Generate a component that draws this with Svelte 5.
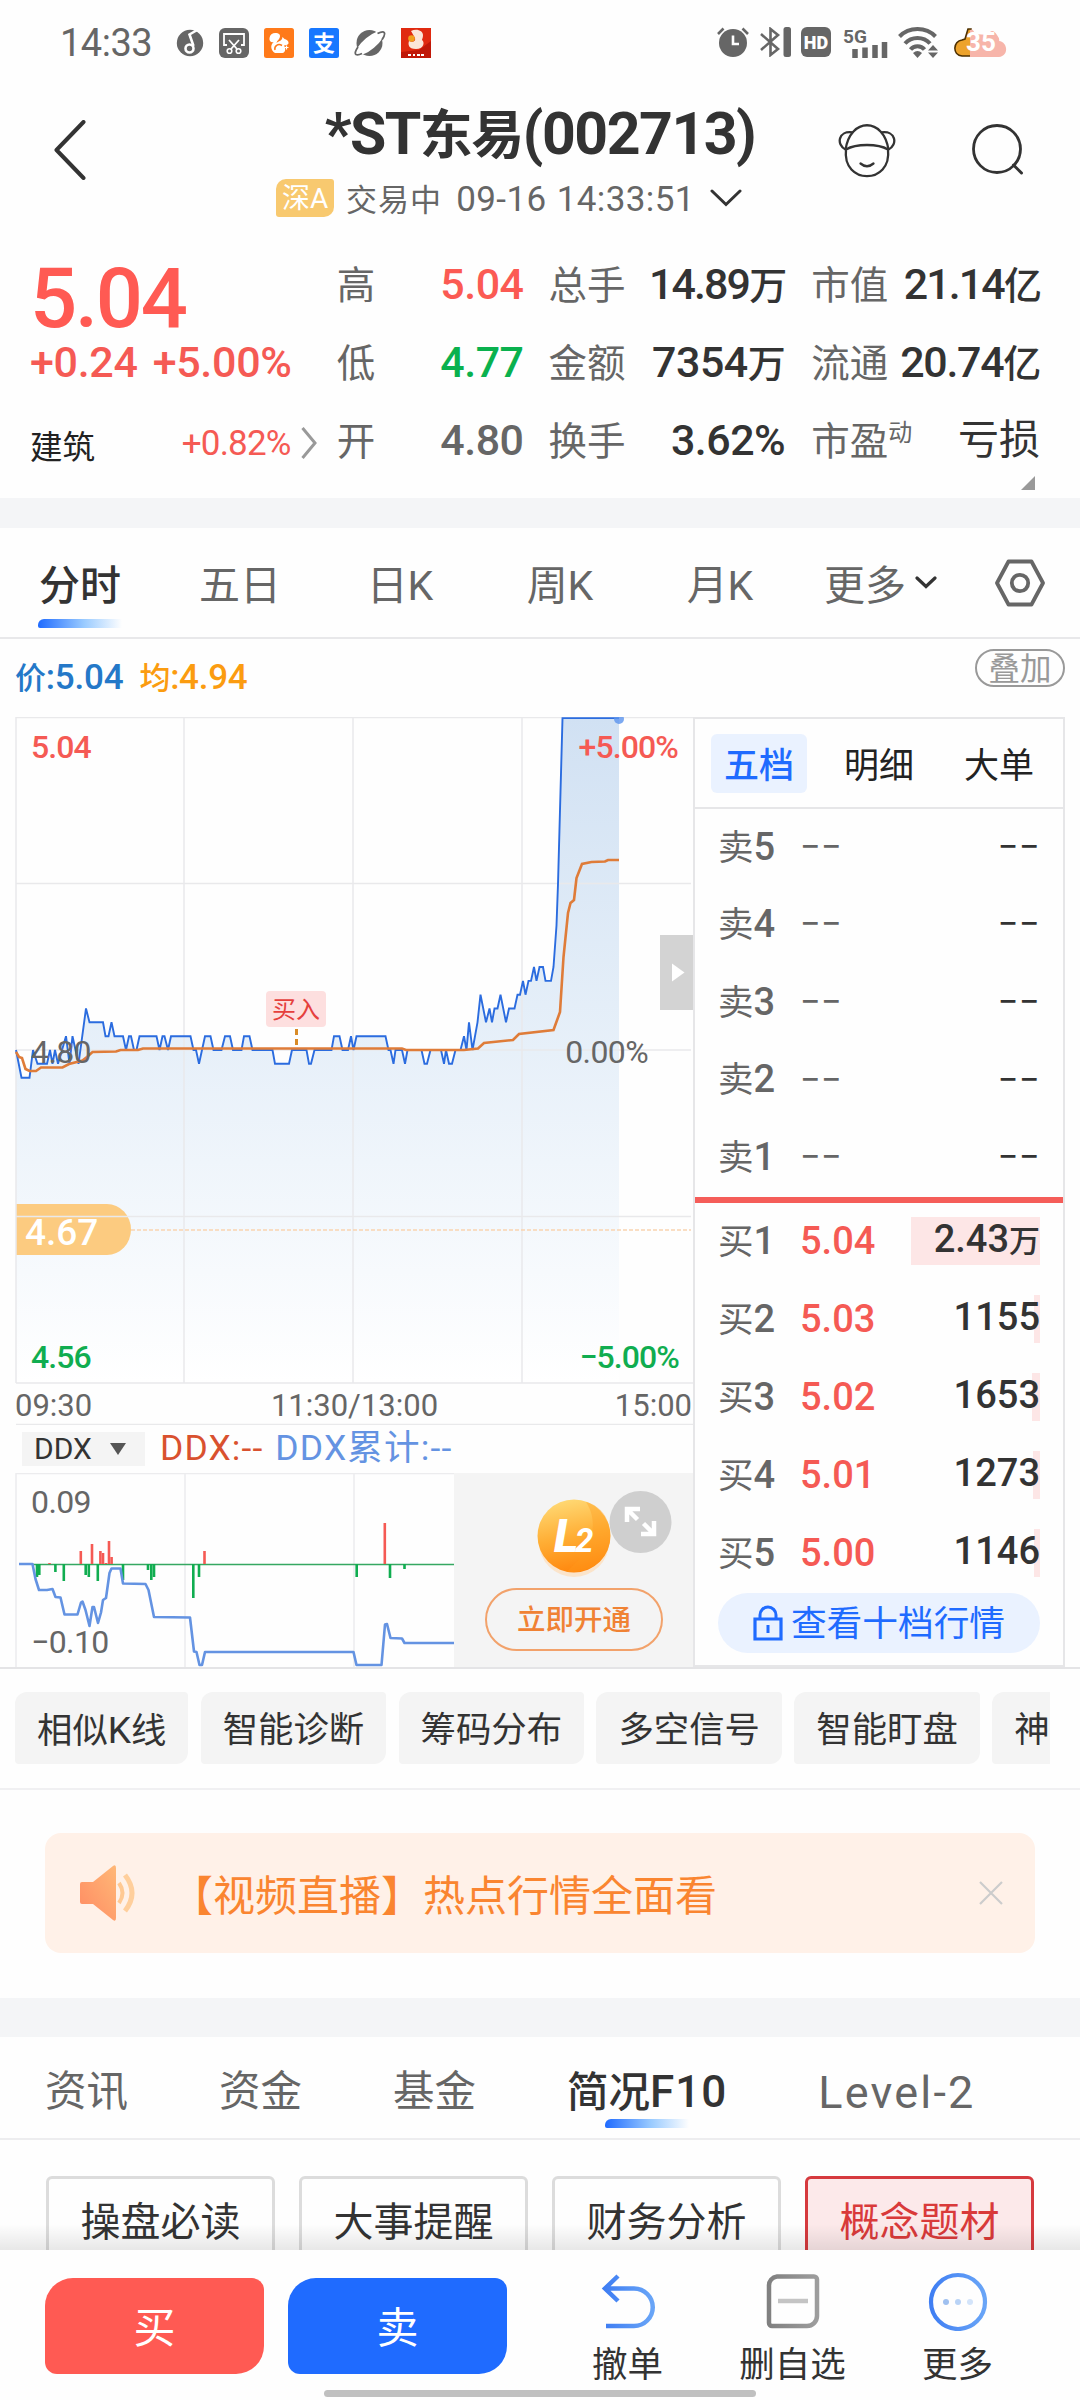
<script lang="ts">
  type Stat = { label: string; sup?: string; value: string; tone?: string };

  // one inner array per column of the quote header
  const stats: Stat[][] = [
    [
      { label: '高', value: '5.04', tone: 'up' },
      { label: '低', value: '4.77', tone: 'down' },
      { label: '开', value: '4.80', tone: 'flat' },
    ],
    [
      { label: '总手', value: '14.89万' },
      { label: '金额', value: '7354万' },
      { label: '换手', value: '3.62%' },
    ],
    [
      { label: '市值', value: '21.14亿' },
      { label: '流通', value: '20.74亿' },
      { label: '市盈', sup: '动', value: '亏损' },
    ],
  ];

  const periods = ['分时', '五日', '日K', '周K', '月K'];
  const asks = [5, 4, 3, 2, 1];
  const bids = [
    { price: '5.04', volume: '2.43万', bar: 129 },
    { price: '5.03', volume: '1155', bar: 6 },
    { price: '5.02', volume: '1653', bar: 8 },
    { price: '5.01', volume: '1273', bar: 7 },
    { price: '5.00', volume: '1146', bar: 6 },
  ];
  const tools = ['相似K线', '智能诊断', '筹码分布', '多空信号', '智能盯盘', '神奇九转'];
  const sections = ['资讯', '资金', '基金', '简况F10', 'Level-2'];
  const topics = ['操盘必读', '大事提醒', '财务分析', '概念题材'];

  // [x, ticks of 0.01 away from the previous close]
  const price = [
    [16, 0], [21.5, -2], [29.5, -2], [33, 0], [37.5, -1], [47, -1], [50, 0], [52.5, -1], [55, 0], [58, -1],
    [66, 1], [69.5, -1], [72.5, 1], [78.5, -1], [86, 3], [89.5, 2], [103, 2], [105.5, 1], [108.5, 1], [111.5, 2],
    [114.5, 1], [123, 1], [126, 0], [129, 1], [131, 1], [134, 0], [136.5, 0], [139.5, 1], [156.5, 1], [159.5, 0],
    [162.5, 1], [164.5, 1], [168, 0], [171, 1], [190.5, 1], [193.5, 0], [196, 0], [199, -1], [205, 1], [210.5, 1],
    [213.5, 0], [221.5, 0], [225, 1], [230, 1], [233, 0], [241.5, 0], [244, 1], [249.5, 1], [252.5, 0], [272.5, 0],
    [275, -1], [289, -1], [292, 0], [306.5, 0], [309, -1], [311, -1], [314.5, 0], [331.5, 0], [334, 1], [339.5, 1],
    [342.5, 0], [348, 0], [351, 1], [353.5, 0], [356.5, 1], [385.5, 1], [388.5, 0], [390.5, 0], [393.5, -1], [395.5, 0],
    [402, 0], [405, -1], [407.5, 0], [421.5, 0], [424.5, -1], [427, -1], [430.5, 0], [441, 0], [444, -1], [446, 0],
    [449, -1], [452, -1], [455.5, 0], [460.5, 0], [464, 1], [466.5, 0], [469, 2], [472.5, 0], [477.5, 2], [480.5, 4],
    [486, 2], [489.5, 3], [492, 2], [494.5, 3], [497.5, 3], [500.5, 4], [506, 2], [509, 3], [514.5, 3], [517.5, 4],
    [520, 4], [523, 5], [525.5, 4], [528.5, 5], [531, 5], [534, 6], [536.5, 5], [539.5, 6], [543, 6], [545.5, 5],
    [551, 5], [553.5, 6], [556.5, 9], [558, 12], [562.5, 24], [619, 24],
  ];
  const pricePoints = price.map(([x, t]) => `${x},${(1050 - t * 13.83).toFixed(1)}`).join(' ');

  const average =
    '16,1052 19,1057 22,1058 25.5,1069 29.5,1071 36,1071 41,1067.5 62.5,1067.5 69,1064 82.5,1060.5 87,1057 92.5,1052 116,1051.5 120.5,1050 138,1050 143,1048.5 402,1048.5 406,1050 464,1050 478,1048.5 484,1043 513,1040 519,1034 553.5,1030 560,1012 563.5,957 568,913 570.5,903 574,900 576.5,878 582,864 591.5,862 605,861.5 608,860 619,860';

  // [x, height], positive bars go up
  const ddxBars = [
    [37, -13], [39.3, -11], [49.5, 1], [55.4, -8], [63.8, -17], [80.8, 13], [85.7, -11], [88.8, -13], [92, 20],
    [97.8, -17], [100.4, 13], [103, 11], [106, 1], [109, 23], [111.6, 7], [123, -16], [148, -6], [151.3, -16],
    [154, -13], [193.3, -34], [199, -13], [204.5, 13], [356.7, -13], [384.8, 41], [390, -14], [404.5, -5],
  ];
  const ddxLine =
    '19,1564 32.5,1564 35.5,1579 39,1590 47,1590 52.5,1589 55.5,1597 60.5,1597.5 64.5,1614.5 77.5,1614.5 81,1602.5 82.5,1601.5 85.5,1610 89.5,1626 92.5,1607 94,1607 98,1623 101,1612.5 103,1600 106,1598 109.5,1573 111.5,1568.5 120.5,1568.5 123,1583.5 145.5,1584 148.5,1590 154,1617 190,1617.5 194,1651.5 196.5,1652 199.5,1665 202,1665 205,1652 353.5,1652 356.5,1665 381.5,1665 385,1624.5 387,1624 390.5,1638 402,1638.5 404.5,1643 454,1643';

  // latin runs are set a little larger than the hanzi next to them
  const HAN = /[\u4e00-\u9fff]/;
  const runs = (text: string) => text.match(/[\u4e00-\u9fff]+|[^\u4e00-\u9fff]+/g) ?? [];
</script>

{#snippet mixed(text: string)}{#each runs(text) as run}<span class:num={!HAN.test(run)}>{run}</span>{/each}{/snippet}

<div class="screen">
  <div class="status">
    <span class="clock">14:33</span>
    <div class="apps">
      <svg width="28" height="30" viewBox="0 0 28 30">
        <circle cx="14" cy="15" r="13.2" fill="#666" />
        <path d="M22 1.500 13.500 6.500 17.500 18" fill="none" stroke="#fff" stroke-width="2.600" />
        <circle cx="13.500" cy="20.500" r="4" fill="#666" stroke="#fff" stroke-width="2.600" />
      </svg>
      <svg width="30" height="30" viewBox="0 0 30 30">
        <rect width="30" height="30" rx="6" fill="#666" />
        <path d="M8 17H5V6H25V17H22" fill="none" stroke="#fff" stroke-width="1.800" />
        <path d="M10 12 L18 21 M20 12 L12 21" stroke="#fff" stroke-width="1.800" />
        <circle cx="10.500" cy="23" r="2.300" fill="none" stroke="#fff" stroke-width="1.600" />
        <circle cx="19.500" cy="23" r="2.300" fill="none" stroke="#fff" stroke-width="1.600" />
      </svg>
      <svg width="30" height="30" viewBox="0 0 30 30">
        <rect width="30" height="30" rx="2.500" fill="#ff7a1a" />
        <path d="M9.500 24C6 20 7 16 10 14c-3 1-5-1-4.500-4C6 6 9 4.500 12.500 5s4.500 3 2.500 6c-1 1.500-2 2-2.500 4 1.500-2 4-1.500 5.500-4l.5-2 2 2c2.500.5 4.500 2.500 4 4.500-1 2-3 1.500-4.500 2 2 3 1.500 7-1.500 7.500H11z" fill="#fff" />
        <path d="M11 22c-1-4 3-7 7-4.500" fill="none" stroke="#ff7a1a" stroke-width="1.500" />
        <path d="M20.500 19.500h4M22.500 17.500v4" stroke="#fff" stroke-width="1.200" />
      </svg>
      <svg width="30" height="30" viewBox="0 0 30 30">
        <rect width="30" height="30" rx="2.500" fill="#1777ff" />
        <text x="15" y="22.500" text-anchor="middle" class="zhi">支</text>
      </svg>
      <svg width="32" height="30" viewBox="0 0 32 30">
        <circle cx="15.500" cy="15" r="13" fill="#666" />
        <ellipse cx="16" cy="15" rx="17.500" ry="6.200" transform="rotate(-40 16 15)" fill="#fff" />
        <path d="M4 19c-2.500 3.500-3.500 6.500-2 7.500 1.500.8 4 0 6-1M23.500 5.500c3-1.500 6-2 6.800-.8.800 1.200-.3 4-2.300 7" fill="none" stroke="#666" stroke-width="1.800" />
      </svg>
      <svg width="30" height="30" viewBox="0 0 30 30">
        <rect width="30" height="30" fill="#e02a10" />
        <path d="M18 22 30 13V30H0V24z" fill="#c01808" />
        <path d="M10 3c6-3 12 0 12 4 0 3-1 4-1 5 3 2 2 9-6 9s-8-5-7-8c4 2 7 0 6-3z" fill="#fbe6d8" />
        <circle cx="10.500" cy="10.500" r="3.300" fill="#f0a01c" />
        <path d="M7 27h3M12 27h2M16 27h3M20 27h3" stroke="#fff" stroke-width="1.800" />
      </svg>
    </div>
    <div class="signals">
      <svg width="34" height="30" viewBox="0 0 34 30">
        <circle cx="17" cy="16" r="14" fill="#666" />
        <path d="M2 7 7.500 1.500 M32 7 26.500 1.500" stroke="#666" stroke-width="2.600" />
        <path d="M17 8.500V17H23" fill="none" stroke="#fff" stroke-width="2.600" />
      </svg>
      <svg width="31" height="30" viewBox="0 0 31 30">
        <path d="M1 7 18 22 10.500 28V2L18 8 1 23" fill="none" stroke="#666" stroke-width="2.600" />
        <rect x="23.500" y="0" width="7.500" height="30" rx="2.500" fill="#666" />
      </svg>
      <svg width="30" height="30" viewBox="0 0 30 30">
        <rect width="30" height="30" rx="6" fill="#666" />
        <text x="15" y="21.500" text-anchor="middle" class="hd">HD</text>
      </svg>
      <svg class="cell" width="45" height="32" viewBox="0 0 45 32">
        <text x="0" y="16" class="fiveg">5G</text>
        <path d="M12 31V22M22 31V20.500M32 31V18M41.500 31V15" stroke="#666" stroke-width="5.500" />
      </svg>
      <svg width="40" height="31" viewBox="0 0 40 31">
        <g fill="none" stroke="#666" stroke-width="4">
          <path d="M1.500 9.500C11-.5 28-.5 37.500 9.500" />
          <path d="M7 16.500C13.500 9 25.500 9 32 16.500" />
          <path d="M12.500 22.500C16 18 23 18 26.500 22.500" />
        </g>
        <path d="M15 26q4.500-4 9 0l-4.500 5z" fill="#666" />
        <path d="M30 23.500 35 18l5 5.500zM30 25.500h10L35 31z" fill="#666" />
      </svg>
      <svg class="power" width="53" height="31" viewBox="0 0 53 31">
        <path d="M11 12 14 2l3 0 1 27H8C-2 28-1 14 8 13z" fill="#eda32c" stroke="#4d3000" stroke-width="1.600" />
        <path d="M16 30V3q3-2 5 4l13 1q4-8 9 0 3 4 2 6c9 1 10 15 0 16z" fill="#f7b5aa" />
        <text x="27" y="24" text-anchor="middle" class="battery">35</text>
      </svg>
    </div>
  </div>

  <header>
    <svg class="back" width="32" height="60" viewBox="0 0 32 60">
      <path d="M29.500 2 2.500 30 29.500 58" fill="none" stroke="#333" stroke-width="4" stroke-linecap="round" stroke-linejoin="round" />
    </svg>
    <div class="heading">
      <h1>{@render mixed('*ST东易(002713)')}</h1>
      <div class="session">
        <span class="badge">深A</span>
        <span class="time">{@render mixed('交易中 09-16 14:33:51')}</span>
        <svg width="32" height="18" viewBox="0 0 32 18">
          <path d="M2 2 16 15.500 30 2" fill="none" stroke="#333" stroke-width="3" stroke-linecap="round" />
        </svg>
      </div>
    </div>
    <div class="actions">
      <svg width="58" height="54" viewBox="0 0 58 54">
        <g fill="none" stroke="#333" stroke-width="2.300">
          <path d="M7.500 25.500C-2 21 0 6 15 8.500M50.500 25.500C60 21 58 6 43 8.500" />
          <path d="M7.500 26C12-7 46-7 50.500 26" />
          <path d="M8 25.500C18 19.500 40 19.500 50 25.500C54 61 4 61 8 25.500Z" />
          <path d="M22.500 39.500Q29 45 35.500 39.500" stroke-linecap="round" />
        </g>
      </svg>
      <svg width="52" height="52" viewBox="0 0 52 52">
        <circle cx="25" cy="25" r="23.500" fill="none" stroke="#333" stroke-width="2.800" />
        <path d="M41.500 41 49.500 49" stroke="#333" stroke-width="3" stroke-linecap="round" />
      </svg>
    </div>
  </header>

  <section class="quote">
    <div class="last">
      <div class="price">5.04</div>
      <div class="change"><span>+0.24</span><span>+5.00%</span></div>
      <div class="sector">
        <span class="name">建筑</span>
        <span class="pct">+0.82%</span>
        <svg width="16" height="32" viewBox="0 0 16 32">
          <path d="M1.500 1 14 16 1.500 31" fill="none" stroke="#999" stroke-width="3" />
        </svg>
      </div>
    </div>
    {#each stats as column}
      <dl>
        {#each column as stat}
          <div class="stat">
            <dt>{stat.label}{#if stat.sup}<sup>{stat.sup}</sup>{/if}</dt>
            <dd class={stat.tone} class:word={stat.value === '亏损'} class:tight={stat.value.includes('1')}>{@render mixed(stat.value)}</dd>
          </div>
        {/each}
      </dl>
    {/each}
    <span class="corner"></span>
  </section>

  <div class="strip"></div>

  <nav class="periods">
    {#each periods as period, i}
      <span class="period" class:active={i === 0}>{period}</span>
    {/each}
    <span class="more">
      <span>更多</span>
      <svg width="22" height="14" viewBox="0 0 22 14">
        <path d="M2 2 11 10.500 20 2" fill="none" stroke="#333" stroke-width="3.200" stroke-linecap="round" />
      </svg>
    </span>
    <svg class="settings" width="52" height="48" viewBox="0 0 52 48">
      <path d="M14.500 2.500H37.500L49 24 37.500 45.500H14.500L3 24Z" fill="none" stroke="#666" stroke-width="3.800" stroke-linejoin="round" />
      <circle cx="26" cy="24" r="8.200" fill="none" stroke="#666" stroke-width="3.800" />
    </svg>
  </nav>

  <div class="legend">
    <span class="now">{@render mixed('价:5.04')}</span>
    <span class="avg">{@render mixed('均:4.94')}</span>
    <span class="overlay">叠加</span>
  </div>

  <section class="board">
    <div class="charts">
      <svg class="trend" width="678" height="708" viewBox="15 717 678 708">
        <defs>
          <linearGradient id="area" x1="0" y1="0" x2="0" y2="1">
            <stop offset="0" stop-color="#d1e1f3" />
            <stop offset="0.500" stop-color="#e7f0f9" />
            <stop offset="1" stop-color="#fff" />
          </linearGradient>
        </defs>
        <polygon points="{pricePoints} 619,1383 16,1383" fill="url(#area)" />
        <path d="M16 1204H107a24 25.500 0 0 1 0 51H16z" fill="#fccb80" />
        <g stroke="#e9e9eb" stroke-width="1.500">
          <path d="M16 717.500H693M16 883.500H691M16 1050H691M16 1216.500H691M16 1383H693M16 1424.500H693" />
          <path d="M16 717V1383M184 717V1383M353 717V1383M522 717V1383" />
        </g>
        <path d="M131 1230H691" stroke="#f9d3b0" stroke-width="1.500" stroke-dasharray="4 2" />
        <polyline points={pricePoints} fill="none" stroke="#2b6cdf" stroke-width="1.900" />
        <polyline points={average} fill="none" stroke="#df7c39" stroke-width="2.600" />
        <circle cx="619" cy="719" r="5" fill="#5b93ee" opacity="0.800" />
        <text x="31" y="1062.500" class="tick flat">4.80</text>
        <text x="648" y="1062.500" text-anchor="end" class="tick flat">0.00%</text>
        <text x="31" y="758" class="tick up">5.04</text>
        <text x="678" y="758" text-anchor="end" class="tick up">+5.00%</text>
        <text x="31" y="1367.500" class="tick down">4.56</text>
        <text x="679" y="1367.500" text-anchor="end" class="tick down">−5.00%</text>
        <text x="25" y="1244.500" class="cost">4.67</text>
        <rect x="266" y="991" width="60" height="36" rx="4" fill="#fddfdf" />
        <text x="296" y="1018" text-anchor="middle" class="buy-mark">买入</text>
        <path d="M296.500 1029V1048" stroke="#d98b27" stroke-width="3" stroke-dasharray="6 4" />
        <rect x="660" y="935" width="33" height="75" fill="#d3d3d3" />
        <path d="M672 963.500V981.500L684.500 972.500Z" fill="#fff" />
        <text x="15" y="1416" class="axis">09:30</text>
        <text x="354.500" y="1416" text-anchor="middle" class="axis">11:30/13:00</text>
        <text x="692" y="1416" text-anchor="end" class="axis">15:00</text>
      </svg>

      <div class="indicator">
        <span class="picker">DDX
          <svg width="18" height="12" viewBox="0 0 18 12"><path d="M1 0H17L9 12Z" fill="#555" /></svg>
        </span>
        <span class="ddx">DDX:--</span>
        <span class="ddx-sum">DDX累计:--</span>
      </div>

      <div class="ddx-row">
        <svg width="439" height="194" viewBox="15 1473 439 194">
          <path d="M16 1473.500H454M16 1473V1667M185 1473V1667M354 1473V1667" stroke="#ececee" stroke-width="1.500" />
          <path d="M32 1564.500H454" stroke="#35a862" stroke-width="1.400" />
          {#each ddxBars as [x, h]}
            <rect x={x - 1.3} y={h > 0 ? 1564 - h : 1564} width="2.600" height={Math.abs(h)} fill={h > 0 ? '#f55a54' : '#10ad50'} />
          {/each}
          <polyline points={ddxLine} fill="none" stroke="#6493e2" stroke-width="2.600" stroke-linejoin="round" />
          <text x="31" y="1512.500" class="tick flat">0.09</text>
          <text x="31" y="1652.500" class="tick flat">−0.10</text>
        </svg>
        <div class="unlock">
          <svg width="152" height="90" viewBox="0 0 152 90">
            <defs>
              <linearGradient id="coin" x1="0.400" y1="0" x2="0.600" y2="1">
                <stop offset="0" stop-color="#ffd873" />
                <stop offset="0.500" stop-color="#ffae35" />
                <stop offset="1" stop-color="#ff850c" />
              </linearGradient>
            </defs>
            <ellipse cx="48" cy="52" rx="35" ry="35" fill="#ffd9ae" opacity="0.600" />
            <circle cx="48" cy="46" r="36.500" fill="url(#coin)" />
            <path d="M60 12C72 30 70 58 40 82C70 84 86 64 84 42C83 26 73 15 60 12Z" fill="#ff9a1c" opacity="0.350" />
            <text x="28" y="62" class="coin-l">L</text>
            <text x="49" y="62" class="coin-2">2</text>
            <circle cx="114.500" cy="32" r="31" fill="#cfcfcf" />
            <g fill="none" stroke="#fff" stroke-width="4.500">
              <path d="M101 32V19H114M101.500 19.500 111.500 29.500" />
              <path d="M128 31V44H115M127.500 43.500 117.500 33.500" />
            </g>
          </svg>
          <span class="open">立即开通</span>
        </div>
      </div>
    </div>

    <div class="book">
      <div class="book-tabs">
        <span class="active">五档</span>
        <span>明细</span>
        <span>大单</span>
      </div>
      {#each asks as level}
        <div class="level ask">
          <span class="side">{@render mixed(`卖${level}`)}</span>
          <span class="none">−−</span>
          <span class="none volume">−−</span>
        </div>
      {/each}
      <div class="divider"></div>
      {#each bids as bid, i}
        <div class="level">
          <span class="side">{@render mixed(`买${i + 1}`)}</span>
          <span class="bid">{bid.price}</span>
          <span class="volume">
            <i style:width="{bid.bar}px"></i>
            <b>{@render mixed(bid.volume)}</b>
          </span>
        </div>
      {/each}
      <div class="ten">
        <svg width="30" height="36" viewBox="0 0 30 36">
          <path d="M2 14H28V34H2Z" fill="none" stroke="#1f6bff" stroke-width="3.200" />
          <path d="M7 14V10a8 8 0 0 1 16 0V14M15 20V28" fill="none" stroke="#1f6bff" stroke-width="3" />
        </svg>
        <span>查看十档行情</span>
      </div>
    </div>
  </section>

  <div class="tools">
    {#each tools as tool}
      <span>{@render mixed(tool)}</span>
    {/each}
  </div>

  <div class="notice-wrap">
    <div class="notice">
      <svg width="58" height="58" viewBox="0 0 58 58">
        <defs>
          <linearGradient id="horn" x1="0" y1="1" x2="1" y2="0">
            <stop offset="0" stop-color="#ff8a62" />
            <stop offset="1" stop-color="#ffb877" />
          </linearGradient>
        </defs>
        <path d="M3 18H14L34 2Q37 0 37 4V54Q37 58 34 56L14 40H3Q1 40 1 38V20Q1 18 3 18Z" fill="url(#horn)" />
        <path d="M40 19Q47 29 40 39" fill="none" stroke="#ffc993" stroke-width="4" />
        <path d="M46 11Q60 29 46 47" fill="none" stroke="#ffcf9c" stroke-width="5" />
      </svg>
      <span>【视频直播】热点行情全面看</span>
      <svg class="close" width="24" height="24" viewBox="0 0 24 24">
        <path d="M1 1 23 23M23 1 1 23" stroke="#ccc" stroke-width="2.200" />
      </svg>
    </div>
  </div>

  <div class="strip tall"></div>

  <nav class="sections">
    {#each sections as name}
      <span class:active={name === '简况F10'}>{@render mixed(name)}</span>
    {/each}
  </nav>

  <div class="topics">
    {#each topics as topic, i}
      <span class:active={i === 3}>{topic}</span>
    {/each}
  </div>

  <footer>
    <button class="trade buy">买</button>
    <button class="trade sell">卖</button>
    <div class="acts">
      <div class="act">
        <svg width="58" height="60" viewBox="0 0 58 60">
          <defs>
            <linearGradient id="ink" x1="0" y1="0" x2="1" y2="0">
              <stop offset="0" stop-color="#3f7ef3" />
              <stop offset="1" stop-color="#69a5f7" />
            </linearGradient>
            <linearGradient id="ash" x1="0" y1="0" x2="1" y2="0">
              <stop offset="0" stop-color="#808080" />
              <stop offset="1" stop-color="#9d9d9d" />
            </linearGradient>
          </defs>
          <path d="M19 5 6 17.500 19 30M6 17.500H35a18.700 18.700 0 0 1 0 37.500H7" fill="none" stroke="url(#ink)" stroke-width="4.500" />
        </svg>
        撤单
      </div>
      <div class="act">
        <svg width="58" height="60" viewBox="0 0 58 60">
          <path d="M13 5.500H50a3 3 0 0 1 3 3V45a10 10 0 0 1-10 10H8a3 3 0 0 1-3-3V15A9 9 0 0 1 13 5.500Z" fill="none" stroke="url(#ash)" stroke-width="4.500" />
          <path d="M14 30H44" stroke="#c4c4c4" stroke-width="4.500" />
        </svg>
        删自选
      </div>
      <div class="act">
        <svg width="60" height="60" viewBox="0 0 60 60">
          <circle cx="30" cy="31" r="27" fill="none" stroke="url(#ink)" stroke-width="4.200" />
          <circle cx="18" cy="31" r="3" fill="#9fc0f0" />
          <circle cx="30" cy="31" r="3" fill="#b9d3f6" />
          <circle cx="42" cy="31" r="3" fill="#d3e4fa" />
        </svg>
        更多
      </div>
    </div>
    <span class="home"></span>
  </footer>
</div>

<style>
  :global(body) {
    background: #fefefe;
  }

  .screen {
    width: 1080px;
    height: 2400px;
    overflow: hidden;
    display: flex;
    flex-direction: column;
    background: #fefefe;
    color: #333;
    font-family: Roboto, 'Noto Sans CJK SC', sans-serif;
    line-height: 1;
  }

  .screen > * {
    flex: none;
    box-sizing: border-box;
  }

  .screen svg {
    display: block;
    flex: none;
  }

  .num {
    font-size: 1.13em;
  }

  .up {
    color: #fb5a53;
    fill: #f55a54;
  }

  .down {
    color: #0ab14e;
    fill: #10ad50;
  }

  .flat {
    color: #666;
    fill: #666;
  }

  /* Status bar */
  .status {
    display: flex;
    align-items: center;
    height: 85px;
    padding: 0 73px 0 60px;
  }

  .clock {
    width: 116px;
    font-size: 38px;
    letter-spacing: -0.5px;
    color: #666;
  }

  .apps {
    display: flex;
    gap: 15px;
  }

  .signals {
    display: flex;
    gap: 10px;
    margin-left: auto;
  }

  .screen .cell {
    margin-left: 2px;
    overflow: visible;
  }

  .power {
    margin-left: 6px;
  }

  .zhi {
    font: 700 22px/1 Roboto, 'Noto Sans CJK SC', sans-serif;
    fill: #fff;
  }

  .hd {
    font: 900 18px Roboto, sans-serif;
    fill: #fff;
  }

  .fiveg {
    font: 700 19px/1 Roboto, sans-serif;
    fill: #666;
  }

  .battery {
    font: 700 26px Roboto, sans-serif;
    fill: #fff;
  }

  /* Header */
  header {
    display: grid;
    grid-template-columns: 1fr auto 1fr;
    height: 155px;
    padding: 0 54px;
  }

  .back {
    margin-top: 35px;
  }

  .heading {
    display: flex;
    flex-direction: column;
    align-items: center;
    padding-top: 19px;
  }

  h1 {
    margin: 0;
    font-size: 53px;
    line-height: 60px;
    font-weight: 700;
    letter-spacing: -1.5px;
    white-space: nowrap;
  }

  h1 .num {
    font-size: 59px;
  }

  .session {
    display: flex;
    align-items: center;
    margin-top: 12px;
    padding-right: 62px;
  }

  .badge {
    box-sizing: border-box;
    width: 58px;
    height: 38px;
    padding-top: 5px;
    border-radius: 10px 3px;
    background: #f8c96f;
    color: #fff;
    font-size: 28px;
    line-height: 30px;
    text-align: center;
  }

  .time {
    margin: 0 15px 0 12px;
    padding-top: 4px;
    font-size: 31px;
    letter-spacing: 1px;
    color: #666;
    white-space: nowrap;
  }

  .time .num {
    margin-left: 4px;
    letter-spacing: 0.4px;
    word-spacing: 1px;
  }

  .actions {
    display: flex;
    justify-content: flex-end;
    gap: 76px;
    padding: 39px 2px 0 0;
  }

  /* Quote */
  .quote {
    position: relative;
    display: flex;
    height: 258px;
    padding: 5px 40px 0 30px;
  }

  .last {
    width: 287px;
    color: #f55a54;
  }

  .price {
    margin-top: 9px;
    font-size: 83px;
    line-height: 89px;
    font-weight: 500;
    color: #ff5a53;
    letter-spacing: -2.2px;
  }

  .change {
    display: flex;
    gap: 15px;
    font-size: 43px;
    line-height: 38px;
    font-weight: 500;
    letter-spacing: -0.3px;
  }

  .sector {
    display: flex;
    align-items: center;
    height: 60px;
    margin-top: 32px;
  }

  .name {
    padding-top: 11px;
    font-size: 32.5px;
    color: #222;
  }

  .pct {
    margin: 0 10px 0 auto;
    font-size: 35px;
    letter-spacing: -0.8px;
  }

  dl {
    margin: 0;
  }

  dl:nth-of-type(1) {
    width: 187px;
    margin-left: 20px;
  }

  dl:nth-of-type(2) {
    width: 237px;
    margin-left: 25px;
  }

  dl:nth-of-type(3) {
    width: 229px;
    margin-left: 26px;
  }

  .stat {
    display: flex;
    align-items: center;
    justify-content: space-between;
    height: 78px;
    white-space: nowrap;
  }

  dt {
    padding-top: 4px;
    font-size: 38.5px;
    color: #666;
  }

  sup {
    display: inline-block;
    font-size: 24px;
    line-height: 0;
    vertical-align: 14px;
  }

  dd {
    margin: 0;
    font-size: 38px;
    font-weight: 500;
    letter-spacing: -0.5px;
  }

  dl:nth-of-type(3) dd {
    letter-spacing: -1.3px;
  }

  dl dd.tight,
  dl:nth-of-type(3) dd.tight {
    letter-spacing: -1.9px;
  }

  dl:nth-of-type(3) dd.word {
    font-size: 41px;
    font-weight: 400;
    letter-spacing: 0;
  }

  .corner {
    position: absolute;
    right: 45px;
    bottom: 8px;
    border-style: solid;
    border-width: 0 0 14px 14px;
    border-color: transparent transparent #999;
  }

  .strip {
    height: 30px;
    background: #f4f5f7;
  }

  .strip.tall {
    height: 39px;
  }

  /* Period tabs */
  .periods {
    display: flex;
    align-items: center;
    height: 111px;
    border-bottom: 2px solid #e8e8ea;
    font-size: 41px;
    color: #666;
  }

  .period {
    position: relative;
    width: 160px;
    padding-top: 8px;
    text-align: center;
  }

  .active {
    font-weight: 500;
    color: #333;
  }

  .period.active::after,
  .sections .active::after {
    content: '';
    position: absolute;
    left: 50%;
    bottom: -21px;
    width: 84px;
    height: 9px;
    margin-left: -42px;
    border-radius: 6px 0 0 2px;
    background: linear-gradient(90deg, #1f6bff, #9acbff 55%, #fefefe);
  }

  .more {
    display: flex;
    align-items: center;
    gap: 9px;
    margin-left: 24px;
  }

  .more span {
    padding-top: 8px;
  }

  .settings {
    margin-left: 57px;
  }

  /* Chart legend */
  .legend {
    display: flex;
    align-items: flex-start;
    height: 78px;
    padding: 21px 15px 0 15px;
    font-size: 31px;
    font-weight: 500;
  }

  .now {
    margin-right: 16px;
    color: #2478c8;
    letter-spacing: -0.2px;
  }

  .avg {
    color: #fb9c10;
    letter-spacing: -0.3px;
  }

  .overlay {
    box-sizing: border-box;
    width: 90px;
    height: 38px;
    margin: -11px 0 0 auto;
    padding-top: 3px;
    border: 2px solid #999;
    border-radius: 19px;
    color: #999;
    font-size: 31.5px;
    font-weight: 400;
    text-align: center;
  }

  /* Charts */
  .board {
    display: flex;
    height: 952px;
    padding: 0 15px;
    border-bottom: 2px solid #e4e4e6;
  }

  .charts {
    width: 678px;
  }

  .tick {
    font-size: 32px;
    font-weight: 500;
    letter-spacing: -0.9px;
  }

  .tick.flat {
    font-weight: 400;
    letter-spacing: -0.6px;
  }

  .cost {
    font-size: 37px;
    font-weight: 500;
    fill: #fff;
  }

  .buy-mark {
    font-size: 24px;
    fill: #e5403d;
  }

  .axis {
    font-size: 31px;
    fill: #666;
  }

  .indicator {
    display: flex;
    align-items: center;
    height: 48px;
    font-size: 35.5px;
    white-space: nowrap;
  }

  .picker {
    display: flex;
    align-items: center;
    justify-content: space-between;
    box-sizing: border-box;
    width: 123px;
    height: 34px;
    margin-left: 7px;
    padding: 0 18px 0 12px;
    background: #f4f4f4;
    font-size: 30px;
  }

  .ddx {
    margin-left: 15px;
    letter-spacing: 1.1px;
    color: #d9512f;
  }

  .ddx-sum {
    margin-left: 12px;
    letter-spacing: 1.2px;
    color: #6493e2;
  }

  .ddx-row {
    display: flex;
    height: 194px;
  }

  .unlock {
    flex: 1;
    background: #f4f4f4;
  }

  .unlock svg {
    margin: 17px 0 0 72px;
  }

  .coin-l {
    font: italic 900 46px Roboto, sans-serif;
    fill: #fff;
  }

  .coin-2 {
    font: italic 700 33px Roboto, sans-serif;
    fill: #fff;
  }

  .open {
    display: block;
    box-sizing: border-box;
    width: 178px;
    height: 63px;
    margin: 8px 0 0 31px;
    border: 2px solid #f2a26b;
    border-radius: 32px;
    color: #f08234;
    font-size: 28.5px;
    line-height: 62px;
    font-weight: 500;
    text-align: center;
  }

  /* Order book */
  .book {
    box-sizing: border-box;
    width: 372px;
    border: 2px solid #e6e6e8;
  }

  .book-tabs {
    display: flex;
    align-items: center;
    height: 90px;
    box-sizing: border-box;
    padding-left: 16px;
    border-bottom: 2px solid #e6e6e8;
    font-size: 35px;
    color: #222;
  }

  .book-tabs span {
    box-sizing: border-box;
    width: 96px;
    height: 59px;
    line-height: 65px;
    text-align: center;
  }

  .book-tabs span + span {
    margin-left: 24px;
  }

  .book-tabs .active {
    border-radius: 6px;
    background: #eaf2ff;
    color: #1f6bff;
  }

  .level {
    display: flex;
    align-items: center;
    height: 78px;
    padding: 0 23px 0 23px;
    font-size: 35.5px;
    color: #666;
  }

  .level > span {
    margin-top: -2px;
  }

  .level .num {
    font-size: 38px;
  }

  .level.ask {
    height: 77.6px;
  }

  .side {
    width: 82px;
    font-weight: 400;
  }

  .side .num {
    font-weight: 500;
  }

  .none {
    font-size: 36px;
    letter-spacing: 0.5px;
  }

  .none.volume {
    color: #333;
  }

  .bid {
    font-size: 38px;
    font-weight: 500;
    color: #f55a54;
  }

  .volume {
    position: relative;
    margin-left: auto;
    color: #333;
  }

  .volume i {
    position: absolute;
    right: 0;
    top: -5px;
    height: 48px;
    background: #fde6e6;
  }

  .volume b {
    position: relative;
    top: -2px;
    font-size: 31px;
    font-weight: 500;
  }

  .divider {
    height: 6px;
    background: #f55d59;
  }

  .ten {
    display: flex;
    align-items: center;
    justify-content: center;
    gap: 8px;
    width: 322px;
    height: 60px;
    margin-left: 23px;
    border-radius: 30px;
    background: #eaf2ff;
    color: #1f6bff;
    font-size: 35.7px;
  }

  .ten span {
    padding-top: 4px;
  }

  /* Tool chips */
  .tools {
    display: flex;
    gap: 12.3px;
    height: 119px;
    margin-right: 30px;
    padding: 23px 0 0 15px;
    overflow: hidden;
  }

  .tools span {
    flex: none;
  }

  .tools > span {
    height: 72px;
    padding: 0 22px;
    border-radius: 12px 4px;
    background: #f4f4f4;
    font-size: 35.4px;
    line-height: 77px;
  }

  .tools .num {
    font-size: 37px;
  }

  .notice-wrap {
    height: 210px;
    padding: 43px 45px 0;
    border-top: 2px solid #f0f0f2;
  }

  .notice {
    display: flex;
    align-items: center;
    height: 120px;
    padding: 0 32px 0 34px;
    border-radius: 16px;
    background: #fff1e8;
    color: #fa8530;
    font-size: 42px;
  }

  .notice span {
    margin-left: 34px;
    padding-top: 8px;
  }

  .close {
    margin-left: auto;
  }

  /* Lower tabs */
  .sections {
    display: flex;
    align-items: center;
    gap: 91px;
    height: 103px;
    padding: 9px 0 0 45px;
    border-bottom: 2px solid #ededef;
    font-size: 41.5px;
    color: #666;
  }

  .sections > span {
    position: relative;
    white-space: nowrap;
  }

  .sections .num {
    font-size: 44px;
    letter-spacing: 1px;
  }

  .sections > span:last-child .num {
    font-size: 45px;
    letter-spacing: 2.2px;
  }

  .sections .active::after {
    bottom: -14px;
  }

  .topics {
    display: flex;
    gap: 24px;
    height: 110px;
    padding: 36px 46px 0;
  }

  .topics span {
    box-sizing: border-box;
    width: 229px;
    height: 96px;
    border: 3px solid #dcdcdc;
    border-radius: 6px;
    font-size: 40px;
    line-height: 88px;
    text-align: center;
  }

  .topics .active {
    border-color: #d63a3e;
    background: #fce9ea;
    color: #d93a3a;
    font-weight: 400;
  }

  /* Bottom bar */
  footer {
    position: relative;
    display: flex;
    align-items: flex-start;
    height: 150px;
    padding: 28px 0 0 45px;
    background: #fefefe;
  }

  footer::before {
    content: '';
    position: absolute;
    left: 0;
    right: 0;
    top: -26px;
    height: 26px;
    background: linear-gradient(rgba(0, 0, 0, 0), rgba(0, 0, 0, 0.09));
  }

  .trade {
    width: 219px;
    height: 96px;
    margin-right: 24px;
    padding: 6px 0 0;
    border: 0;
    border-radius: 28px 12px;
    color: #fff;
    font: 400 42px/1 Roboto, 'Noto Sans CJK SC', sans-serif;
  }

  .buy {
    background: #ff5a53;
  }

  .sell {
    background: #1f6bff;
  }

  .acts {
    display: flex;
    margin: -7px 0 0 14px;
  }

  .act {
    display: flex;
    flex-direction: column;
    align-items: center;
    gap: 17px;
    width: 165px;
    font-size: 35.5px;
  }

  .home {
    position: absolute;
    left: 324px;
    bottom: 3px;
    width: 432px;
    height: 7px;
    border-radius: 4px;
    background: #c0c0c0;
  }
</style>
